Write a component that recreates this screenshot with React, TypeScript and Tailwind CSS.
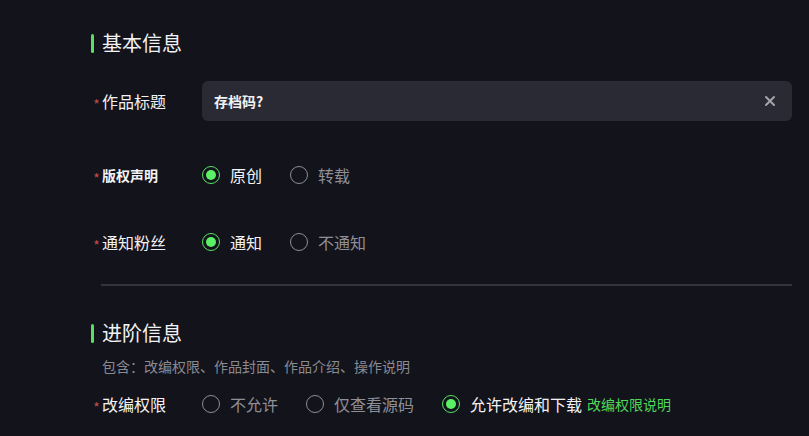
import React, { useState } from 'react';

// ─── Small pieces ─────────────────────────────────────────────────────────────

function SectionTitle({ title }: { title: string }) {
  return (
    <div className="flex h-[20px] items-center gap-[8px]">
      <span className="h-[19px] w-[3px] rounded-full bg-[#57e062]" />
      <span className="text-[20px] leading-[20px] text-[#f2f2f4]">{title}</span>
    </div>
  );
}

function Label({ text, className = 'text-[16px]' }: { text: string; className?: string }) {
  return (
    <div className="flex w-[111px] shrink-0 items-center">
      <span className="w-[11px] pt-[5px] text-center text-[14px] leading-none text-[#c24b4b]">*</span>
      <span className={`leading-none text-[#f2f2f4] ${className}`}>{text}</span>
    </div>
  );
}

interface RadioOption {
  value: string;
  label: string;
}

function RadioGroup({
  options,
  value,
  onChange,
}: {
  options: RadioOption[];
  value: string;
  onChange: (v: string) => void;
}) {
  return (
    <div className="flex items-center gap-[28px]">
      {options.map((o) => {
        const active = o.value === value;
        return (
          <button
            key={o.value}
            onClick={() => onChange(o.value)}
            className="flex items-center gap-[10px]"
          >
            <span
              className={`flex h-[18px] w-[18px] items-center justify-center rounded-full border-[1.5px] ${
                active ? 'border-[#57e062]' : 'border-[#8d8d95]'
              }`}
            >
              {active && <span className="h-[10px] w-[10px] rounded-full bg-[#5cf066]" />}
            </span>
            <span
              className={`text-[16px] leading-none ${active ? 'text-[#f2f2f4]' : 'text-[#8f8f97]'}`}
            >
              {o.label}
            </span>
          </button>
        );
      })}
    </div>
  );
}

// ─── App ──────────────────────────────────────────────────────────────────────

export default function App() {
  const [title, setTitle] = useState('存档码?');
  const [copyright, setCopyright] = useState('original');
  const [notify, setNotify] = useState('yes');
  const [remix, setRemix] = useState('all');

  return (
    <div
      className="h-[436px] w-[809px] overflow-hidden bg-[#13131b]"
      style={{ fontFamily: '"Noto Sans CJK SC", "Noto Sans", sans-serif' }}
    >
      <div className="pl-[91px] pr-[17px] pt-[33px]">
        {/* 基本信息 */}
        <SectionTitle title="基本信息" />

        <div className="mt-[28px] flex h-[40px] items-center">
          <Label text="作品标题" />
          <div className="flex h-[40px] flex-1 items-center rounded-[6px] bg-[#2a2a34] pl-[12px] pr-[16px]">
            <input
              value={title}
              onChange={(e) => setTitle(e.target.value)}
              className="flex-1 bg-transparent text-[14px] font-bold text-[#f2f2f4] outline-none"
            />
            <button onClick={() => setTitle('')} className="text-[#a4a4ac]">
              <svg width="12" height="12" viewBox="0 0 12 12" fill="none">
                <path d="M2 2l8 8M10 2l-8 8" stroke="currentColor" strokeWidth="2" strokeLinecap="round" />
              </svg>
            </button>
          </div>
        </div>

        <div className="mt-[34px] flex h-[40px] items-center">
          <Label text="版权声明" className="text-[14px] font-bold" />
          <RadioGroup
            value={copyright}
            onChange={setCopyright}
            options={[
              { value: 'original', label: '原创' },
              { value: 'repost', label: '转载' },
            ]}
          />
        </div>

        <div className="mt-[27px] flex h-[40px] items-center">
          <Label text="通知粉丝" />
          <RadioGroup
            value={notify}
            onChange={setNotify}
            options={[
              { value: 'yes', label: '通知' },
              { value: 'no', label: '不通知' },
            ]}
          />
        </div>

        <div className="ml-[10px] mt-[22px] h-[2px] bg-[#34343e]" />

        {/* 进阶信息 */}
        <div className="mt-[37px]">
          <SectionTitle title="进阶信息" />
        </div>
        <div className="mt-[13px] pl-[11px] text-[14px] leading-[20px] text-[#8a8a92]">
          包含：改编权限、作品封面、作品介绍、操作说明
        </div>

        <div className="mt-[8px] flex h-[40px] items-center">
          <Label text="改编权限" />
          <RadioGroup
            value={remix}
            onChange={setRemix}
            options={[
              { value: 'none', label: '不允许' },
              { value: 'view', label: '仅查看源码' },
              { value: 'all', label: '允许改编和下载' },
            ]}
          />
          <span className="ml-[5px] text-[14px] leading-none text-[#4fd85a]">改编权限说明</span>
        </div>
      </div>
    </div>
  );
}
